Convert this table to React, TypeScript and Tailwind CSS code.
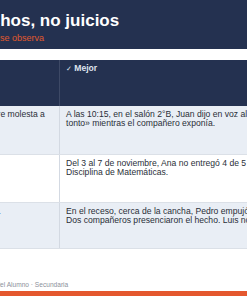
import React from 'react';

const rows = [
  {
    bad: 'Juan es un grosero y siempre molesta a sus compañeros.',
    good: (
      <>
        A las 10:15, en el salón 2°B, Juan dijo en voz alta «eres un
        <br />
        tonto» mientras el compañero exponía.
      </>
    ),
    shade: true,
    height: 'h-[49px]',
  },
  {
    bad: 'Ana es muy floja.',
    good: (
      <>
        Del 3 al 7 de noviembre, Ana no entregó 4 de 5 actividades de la
        <br />
        Disciplina de Matemáticas.
      </>
    ),
    shade: false,
    height: 'h-[48px]',
  },
  {
    bad: 'Pedro fue agresivo con Luis.',
    good: (
      <>
        En el receso, cerca de la cancha, Pedro empujó a Luis y este cayó.
        <br />
        Dos compañeros presenciaron el hecho. Luis no resultó lastimado.
      </>
    ),
    shade: true,
    height: 'h-[46px]',
  },
];

export default function App() {
  return (
    <div
      className="w-[247px] h-[296px] overflow-hidden bg-white flex flex-col"
      style={{ fontFamily: '"Liberation Sans", Arial, sans-serif' }}
    >
      {/* Header */}
      <div className="h-[49px] shrink-0 bg-[#243150] pt-[11px] whitespace-nowrap">
        <h1 className="-ml-[31px] text-[17px] leading-[20px] font-bold text-white">
          Hechos, no juicios
        </h1>
        <p className="-ml-[30px] mt-[2px] text-[9px] leading-[11px] text-[#e0592d]">
          Lo que se observa
        </p>
      </div>

      {/* Table */}
      <div className="mt-[11px] -ml-[114px] w-[520px] shrink-0 text-[8.6px] leading-[9px]">
        <div className="flex h-[46px] bg-[#243150] text-[#dfe4ee] font-bold">
          <div className="w-[174px] shrink-0 px-[6px] pt-[4px] border-r border-[#3d4966]">
            ✗ Evitar
          </div>
          <div className="flex-1 px-[6px] pt-[4px]">
            <span style={{ fontFamily: '"DejaVu Sans", sans-serif' }} className="text-[7px]">✓</span> Mejor
          </div>
        </div>
        {rows.map((r, i) => (
          <div
            key={i}
            className={`flex ${r.height} border-b border-[#dbe0e7] text-[#2a2f38] ${
              r.shade ? 'bg-[#e9eef5]' : 'bg-white'
            }`}
          >
            <div className="w-[174px] shrink-0 px-[6px] pt-[4px] border-r border-[#d3d9e2]">
              {r.bad}
            </div>
            <div className="flex-1 px-[6px] pt-[4px] whitespace-nowrap">{r.good}</div>
          </div>
        ))}
      </div>

      {/* Footer */}
      <div className="mt-auto mb-[2px] -ml-[30px] text-[6.6px] leading-[8px] text-[#8c919b] whitespace-nowrap">
        Registro del Alumno · Secundaria
      </div>
      <div className="h-[5px] shrink-0 bg-[#e4572e]" />
    </div>
  );
}
